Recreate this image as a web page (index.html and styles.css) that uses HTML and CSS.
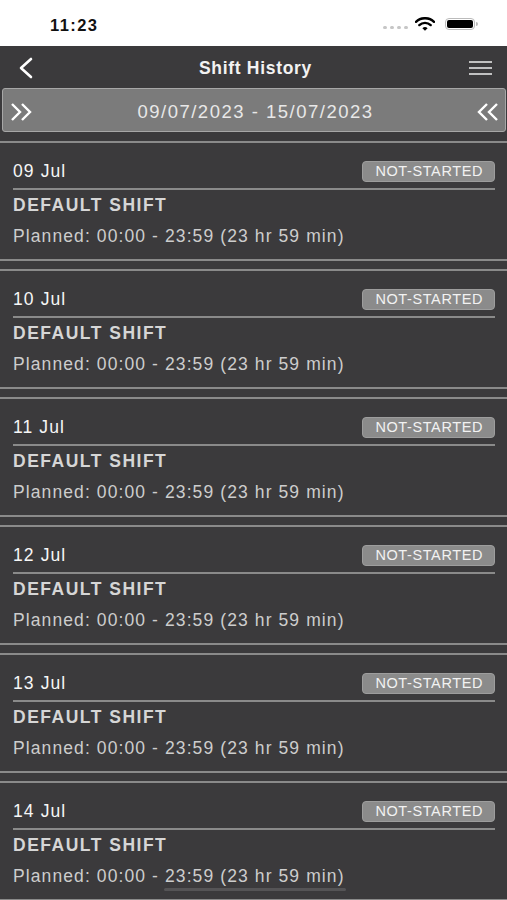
FILE: index.html
```html
<!DOCTYPE html>
<html lang="en">
  <head>
    <meta charset="UTF-8" />
    <meta name="viewport" content="width=device-width, initial-scale=1.0" />
    <title>Shift History</title>
    <link rel="stylesheet" href="styles.css">
  </head>
  <body>
    <div class="phone">
      <div class="status-bar">
        <span class="clock">11:23</span>
        <div class="status-icons">
          <span class="dots"><i></i><i></i><i></i><i></i></span>
          <svg class="wifi" width="20" height="14" viewBox="0 0 20 14">
            <path d="M1 4.8 A13 13 0 0 1 19 4.8" fill="none" stroke="#000" stroke-width="2.4" stroke-linecap="round" />
            <path d="M4.3 8.1 A8.4 8.4 0 0 1 15.7 8.1" fill="none" stroke="#000" stroke-width="2.4" stroke-linecap="round" />
            <path d="M7.4 11.2 A3.8 3.8 0 0 1 12.6 11.2 L10 13.8 Z" fill="#000" />
          </svg>
          <span class="battery"><span class="battery-fill"></span></span>
        </div>
      </div>

      <header class="nav">
        <svg class="back" width="16" height="22" viewBox="0 0 16 22">
          <polyline points="13,2 3,11 13,20" fill="none" stroke="#fff" stroke-width="2.6" stroke-linecap="round" stroke-linejoin="round" />
        </svg>
        <h1>Shift History</h1>
        <svg class="menu" width="23" height="16" viewBox="0 0 23 16">
          <line x1="0" y1="2" x2="23" y2="2" stroke="#e4e4e4" stroke-width="1.6" />
          <line x1="0" y1="8" x2="23" y2="8" stroke="#e4e4e4" stroke-width="1.6" />
          <line x1="0" y1="14" x2="23" y2="14" stroke="#e4e4e4" stroke-width="1.6" />
        </svg>
      </header>

      <div class="range">
        <div class="range-box">
          <svg class="arrows" width="24" height="20" viewBox="0 0 24 20">
            <polyline points="2,2 10,10 2,18" fill="none" stroke="#fff" stroke-width="2.4" stroke-linejoin="miter" />
            <polyline points="12,2 20,10 12,18" fill="none" stroke="#fff" stroke-width="2.4" stroke-linejoin="miter" />
          </svg>
          <span class="range-text">09/07/2023 - 15/07/2023</span>
          <svg class="arrows" width="24" height="20" viewBox="0 0 24 20">
            <polyline points="12,2 4,10 12,18" fill="none" stroke="#fff" stroke-width="2.4" stroke-linejoin="miter" />
            <polyline points="22,2 14,10 22,18" fill="none" stroke="#fff" stroke-width="2.4" stroke-linejoin="miter" />
          </svg>
        </div>
      </div>

      <div class="list">
        <div class="shift">
          <div class="shift-head">
            <span class="shift-date">09 Jul</span>
            <span class="badge">NOT-STARTED</span>
          </div>
          <div class="shift-name">DEFAULT SHIFT</div>
          <div class="shift-time">Planned: 00:00 - 23:59 (23 hr 59 min)</div>
        </div>
        <div class="shift">
          <div class="shift-head">
            <span class="shift-date">10 Jul</span>
            <span class="badge">NOT-STARTED</span>
          </div>
          <div class="shift-name">DEFAULT SHIFT</div>
          <div class="shift-time">Planned: 00:00 - 23:59 (23 hr 59 min)</div>
        </div>
        <div class="shift">
          <div class="shift-head">
            <span class="shift-date">11 Jul</span>
            <span class="badge">NOT-STARTED</span>
          </div>
          <div class="shift-name">DEFAULT SHIFT</div>
          <div class="shift-time">Planned: 00:00 - 23:59 (23 hr 59 min)</div>
        </div>
        <div class="shift">
          <div class="shift-head">
            <span class="shift-date">12 Jul</span>
            <span class="badge">NOT-STARTED</span>
          </div>
          <div class="shift-name">DEFAULT SHIFT</div>
          <div class="shift-time">Planned: 00:00 - 23:59 (23 hr 59 min)</div>
        </div>
        <div class="shift">
          <div class="shift-head">
            <span class="shift-date">13 Jul</span>
            <span class="badge">NOT-STARTED</span>
          </div>
          <div class="shift-name">DEFAULT SHIFT</div>
          <div class="shift-time">Planned: 00:00 - 23:59 (23 hr 59 min)</div>
        </div>
        <div class="shift">
          <div class="shift-head">
            <span class="shift-date">14 Jul</span>
            <span class="badge">NOT-STARTED</span>
          </div>
          <div class="shift-name">DEFAULT SHIFT</div>
          <div class="shift-time">Planned: 00:00 - 23:59 (23 hr 59 min)</div>
        </div>
      </div>

      <div class="home-bar"></div>
    </div>
  </body>
</html>
```

FILE: styles.css
```css
* {
  box-sizing: border-box;
}
body {
  margin: 0;
  font-family: "Liberation Sans", Arial, sans-serif;
  background-color: #3b3a3c;
  overflow: hidden;
}
.phone {
  position: relative;
  width: 507px;
  height: 900px;
  overflow: hidden;
  background-color: #3b3a3c;
}

/* status bar */
.status-bar {
  height: 46px;
  background: #fff;
  display: flex;
  align-items: center;
  justify-content: space-between;
  padding: 0 32px 0 50px;
}
.clock {
  font-size: 16.5px;
  font-weight: bold;
  letter-spacing: 1.4px;
  color: #111;
  margin-top: 4px;
}
.status-icons {
  display: flex;
  align-items: center;
  gap: 7px;
}
.dots {
  display: flex;
  gap: 3px;
  margin-top: 8px;
}
.dots i {
  width: 4px;
  height: 3px;
  border-radius: 2px;
  background: #c6c6c6;
}
.wifi {
  margin-top: 1px;
}
.battery {
  position: relative;
  width: 30px;
  height: 12px;
  border: 1px solid #bbb;
  border-radius: 4px;
  padding: 1px;
  margin-left: 3px;
  margin-top: 2px;
}
.battery::after {
  content: "";
  position: absolute;
  right: -4px;
  top: 3px;
  width: 2px;
  height: 4px;
  border-radius: 0 2px 2px 0;
  background: #bbb;
}
.battery-fill {
  display: block;
  height: 100%;
  background: #000;
  border-radius: 2px;
}

/* nav */
.nav {
  height: 42px;
  display: flex;
  align-items: center;
  justify-content: space-between;
  padding: 0 15px 0 18px;
  background: #3b3a3c;
}
.nav h1 {
  margin: 3px 0 0 8px;
  font-size: 17.5px;
  font-weight: bold;
  letter-spacing: 0.7px;
  color: #f2f2f2;
}
.back {
  margin-top: 1px;
}
.menu {
  margin-top: 2px;
}

/* date range */
.range {
  padding: 0 1px 9px 2px;
}
.range-box {
  height: 44px;
  display: flex;
  align-items: center;
  justify-content: space-between;
  padding: 0 6px 0 7px;
  background: #7b7b7b;
  border: 1.5px solid #a7a7a7;
  border-radius: 3px;
}
.range-text {
  font-size: 18.5px;
  letter-spacing: 1.5px;
  color: #e8e8e8;
  margin: 4px 0 0 2px;
}
.arrows {
  margin-top: 4px;
}

/* shifts */
.list {
  display: flex;
  flex-direction: column;
  gap: 8px;
}
.shift {
  border-top: 2px solid #8a8a8a;
  border-bottom: 2px solid #8a8a8a;
  padding: 18px 12px 13px 13px;
}
.shift-head {
  height: 21px;
  display: flex;
  align-items: center;
  justify-content: space-between;
}
.shift-date {
  font-size: 17.5px;
  letter-spacing: 1.1px;
  color: #f6f6f6;
  margin-top: -1px;
}
.badge {
  height: 21px;
  padding: 0 11px 0 12px;
  font-size: 14.5px;
  letter-spacing: 0.6px;
  line-height: 19px;
  color: #f2f2f2;
  background: #8b8b8b;
  border: 1px solid #9d9d9d;
  border-radius: 4px;
}
.shift-name {
  margin-top: 6px;
  border-top: 2px solid #8a8a8a;
  padding-top: 5px;
  line-height: 20px;
  font-size: 17.5px;
  font-weight: bold;
  letter-spacing: 1.5px;
  color: #d6d6d6;
}
.shift-time {
  margin-top: 11px;
  line-height: 20px;
  font-size: 17.5px;
  letter-spacing: 1.1px;
  color: #cdcdcd;
}

.home-bar {
  position: absolute;
  left: 164px;
  bottom: 9px;
  width: 182px;
  height: 3px;
  border-radius: 2px;
  background: #555456;
}
```
